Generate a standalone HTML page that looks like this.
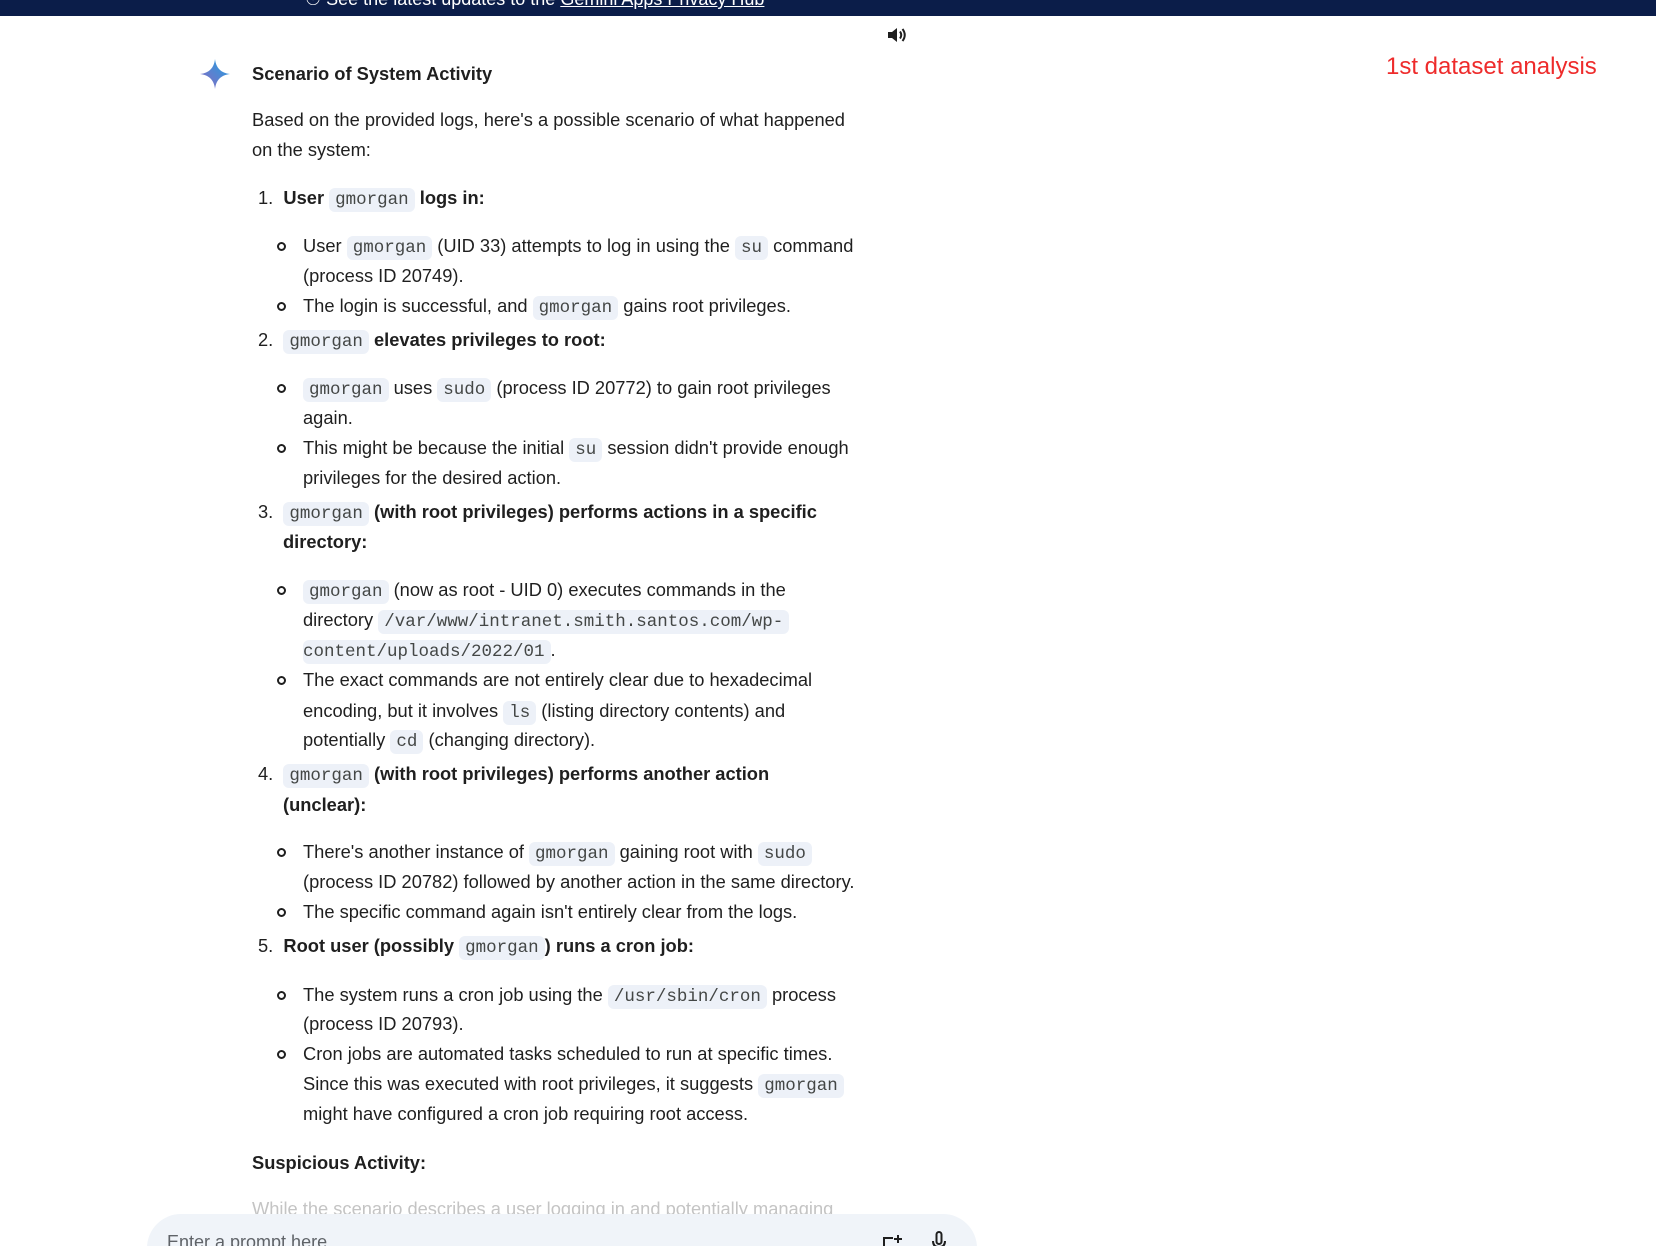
<!DOCTYPE html>
<html><head><meta charset="utf-8">
<style>
html,body{margin:0;padding:0;background:#fff;width:1656px;height:1246px;overflow:hidden;}
body{position:relative;font-family:"Liberation Sans",sans-serif;color:#1f1f1f;}
.l{position:absolute;white-space:nowrap;font-size:18.3px;line-height:30px;height:30px;}
.b{font-weight:bold;}
.n{font-weight:normal;}
code{font-family:"Liberation Mono",monospace;font-size:17.5px;background:#edf1f8;color:#444746;border-radius:6px;padding:2px 6px;font-weight:normal;}
.bul{position:absolute;width:5px;height:5px;border:2px solid #1f1f1f;border-radius:50%;}
</style></head><body>
<div style="position:absolute;left:0;top:0;width:1656px;height:16px;background:#0b1d49;overflow:hidden;">
<div style="position:absolute;left:305px;top:-11px;color:#fff;font-size:18px;white-space:nowrap;">&#9737; See the latest updates to the <u>Gemini Apps Privacy Hub</u></div></div>

<svg style="position:absolute;left:886px;top:25px" width="22" height="20" viewBox="0 0 22 20"><path d="M2 7h4l5-4v14l-5-4H2z" fill="#1f1f1f"/><path d="M14 6.5q2.5 3.5 0 7" stroke="#1f1f1f" stroke-width="2" fill="none"/><path d="M16.5 4q4.5 6 0 12" stroke="#1f1f1f" stroke-width="2" fill="none"/></svg>

<svg style="position:absolute;left:199px;top:58px" width="32" height="32" viewBox="0 0 32 32"><defs><linearGradient id="g" x1="0" y1="1" x2="1" y2="0"><stop offset="0" stop-color="#9168c0"/><stop offset=".5" stop-color="#5684d1"/><stop offset="1" stop-color="#1ba1e3"/></linearGradient></defs><path d="M16 1C17 10 22 15 31 16C22 17 17 22 16 31C15 22 10 17 1 16C10 15 15 10 16 1Z" fill="url(#g)"/></svg>

<div class="l b" style="left:252px;top:59px">Scenario of System Activity</div>
<div style="position:absolute;left:1386px;top:53px;color:#ee2b2b;font-size:24px;white-space:nowrap;">1st dataset analysis</div>

<div class="l" style="left:252px;top:105px">Based on the provided logs, here's a possible scenario of what happened</div>
<div class="l" style="left:252px;top:135px">on the system:</div>

<div class="l b" style="left:258px;top:183px"><span class="n">1.</span>&nbsp; User <code>gmorgan</code> logs in:</div>
<div class="bul" style="left:277px;top:242px"></div>
<div class="l" style="left:303px;top:231px">User <code>gmorgan</code> (UID 33) attempts to log in using the <code>su</code> command</div>
<div class="l" style="left:303px;top:261px">(process ID 20749).</div>
<div class="bul" style="left:277px;top:302px"></div>
<div class="l" style="left:303px;top:291px">The login is successful, and <code>gmorgan</code> gains root privileges.</div>

<div class="l b" style="left:258px;top:325px"><span class="n">2.</span>&nbsp; <code>gmorgan</code> elevates privileges to root:</div>
<div class="bul" style="left:277px;top:384px"></div>
<div class="l" style="left:303px;top:373px"><code>gmorgan</code> uses <code>sudo</code> (process ID 20772) to gain root privileges</div>
<div class="l" style="left:303px;top:403px">again.</div>
<div class="bul" style="left:277px;top:444px"></div>
<div class="l" style="left:303px;top:433px">This might be because the initial <code>su</code> session didn't provide enough</div>
<div class="l" style="left:303px;top:463px">privileges for the desired action.</div>

<div class="l b" style="left:258px;top:497px"><span class="n">3.</span>&nbsp; <code>gmorgan</code> (with root privileges) performs actions in a specific</div>
<div class="l b" style="left:283px;top:527px">directory:</div>
<div class="bul" style="left:277px;top:586px"></div>
<div class="l" style="left:303px;top:575px"><code>gmorgan</code> (now as root - UID 0) executes commands in the</div>
<div class="l" style="left:303px;top:605px">directory <code>/var/www/intranet.smith.santos.com/wp-</code></div>
<div class="l" style="left:303px;top:635px"><code style="padding-left:0;margin-left:0">content/uploads/2022/01</code>.</div>
<div class="bul" style="left:277px;top:676px"></div>
<div class="l" style="left:303px;top:665px">The exact commands are not entirely clear due to hexadecimal</div>
<div class="l" style="left:303px;top:696px">encoding, but it involves <code>ls</code> (listing directory contents) and</div>
<div class="l" style="left:303px;top:725px">potentially <code>cd</code> (changing directory).</div>

<div class="l b" style="left:258px;top:759px"><span class="n">4.</span>&nbsp; <code>gmorgan</code> (with root privileges) performs another action</div>
<div class="l b" style="left:283px;top:790px">(unclear):</div>
<div class="bul" style="left:277px;top:848px"></div>
<div class="l" style="left:303px;top:837px">There's another instance of <code>gmorgan</code> gaining root with <code>sudo</code></div>
<div class="l" style="left:303px;top:867px">(process ID 20782) followed by another action in the same directory.</div>
<div class="bul" style="left:277px;top:908px"></div>
<div class="l" style="left:303px;top:897px">The specific command again isn't entirely clear from the logs.</div>

<div class="l b" style="left:258px;top:931px"><span class="n">5.</span>&nbsp; Root user (possibly <code>gmorgan</code>) runs a cron job:</div>
<div class="bul" style="left:277px;top:991px"></div>
<div class="l" style="left:303px;top:980px">The system runs a cron job using the <code>/usr/sbin/cron</code> process</div>
<div class="l" style="left:303px;top:1009px">(process ID 20793).</div>
<div class="bul" style="left:277px;top:1050px"></div>
<div class="l" style="left:303px;top:1039px">Cron jobs are automated tasks scheduled to run at specific times.</div>
<div class="l" style="left:303px;top:1069px">Since this was executed with root privileges, it suggests <code>gmorgan</code></div>
<div class="l" style="left:303px;top:1099px">might have configured a cron job requiring root access.</div>

<div class="l b" style="left:252px;top:1148px">Suspicious Activity:</div>
<div class="l" style="left:252px;top:1194px;color:#c4c4c4">While the scenario describes a user logging in and potentially managing</div>

<div style="position:absolute;left:147px;top:1214px;width:830px;height:80px;background:#f0f4f9;border-radius:34px;">
<div style="position:absolute;left:20px;top:18px;font-size:18px;color:#5f6368;white-space:nowrap;">Enter a prompt here</div>
<svg style="position:absolute;left:735px;top:20px" width="22" height="20" viewBox="0 0 22 20"><path d="M2 18V4h9M16 1v8M12 5h8" stroke="#1f1f1f" stroke-width="2" fill="none"/></svg>
<svg style="position:absolute;left:784px;top:17px" width="16" height="20" viewBox="0 0 16 20"><rect x="5.5" y="1" width="5" height="12" rx="2.5" fill="none" stroke="#1f1f1f" stroke-width="2"/><path d="M2 10q0 6 6 6q6 0 6-6" stroke="#1f1f1f" stroke-width="2" fill="none"/></svg>
</div>
</body></html>
